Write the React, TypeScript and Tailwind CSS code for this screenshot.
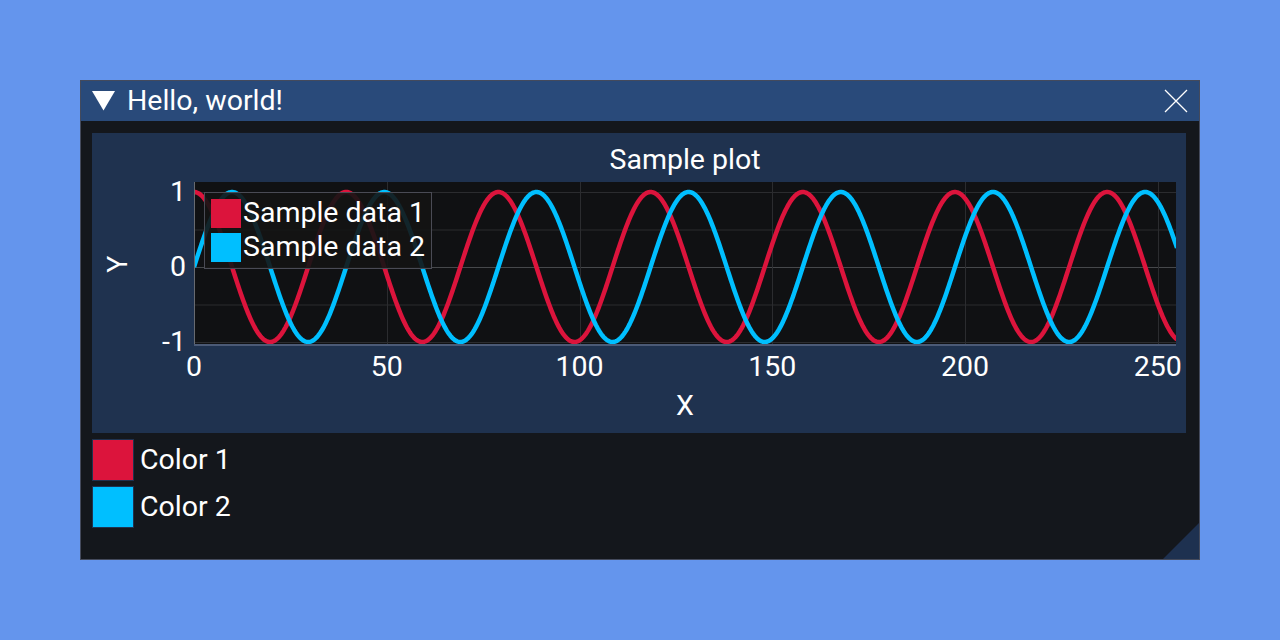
import React from "react";

const PW = 982;
const PH = 164;
const SX = 3.855;
const Y0 = 85;
const SY = 75;
const W = 0.15915;

function buildPath(fn: (x: number) => number) {
  const pts: string[] = [];
  for (let i = 0; i <= 1020; i++) {
    const x = i * 0.25;
    const px = x * SX;
    const py = Y0 - SY * fn(x);
    pts.push(`${i === 0 ? "M" : "L"}${px.toFixed(2)} ${py.toFixed(2)}`);
  }
  return pts.join(" ");
}

const font = { fontFamily: "Roboto, 'Noto Sans', sans-serif" };

export default function App() {
  const red = buildPath((x) => Math.cos(x * W));
  const blue = buildPath((x) => Math.sin(x * W));
  const xticks = [0, 50, 100, 150, 200, 250];
  const yticks: [string, number][] = [
    ["1", 1],
    ["0", 0],
    ["-1", -1],
  ];
  const hgrid = [1, 0.5, -0.5, -1];
  return (
    <div className="w-[1280px] h-[640px] bg-[#6495ed] pt-[80px] pl-[80px] text-white" style={font}>
      <div className="relative w-[1120px] h-[480px] border border-[#444a5c] bg-[#14171c] flex flex-col">
        {/* title bar */}
        <div className="h-[40px] bg-[#294a7a] flex items-center pl-[11px] pr-[11px]">
          <svg width="23" height="20" viewBox="0 0 23 20" className="shrink-0">
            <polygon points="0,0 23,0 11.5,19.5" fill="#ffffff" />
          </svg>
          <span className="ml-[12px] text-[28.5px] leading-none">Hello, world!</span>
          <div className="flex-1" />
          <svg width="24" height="24" viewBox="0 0 24 24" className="shrink-0">
            <path d="M1 1 L23 23 M23 1 L1 23" stroke="#ffffff" strokeWidth="1.3" fill="none" />
          </svg>
        </div>
        {/* body */}
        <div className="pl-[11px] pr-[13px] pt-[12px] flex flex-col">
          <div className="w-[1094px] h-[300px] bg-[#1f324f] flex flex-col">
            <div className="h-[49px] pt-[5px] ml-[102px] w-[982px] flex items-center justify-center text-[28.5px] leading-none">
              Sample plot
            </div>
            <div className="h-[164px] flex">
              <div className="w-[54px] flex items-center justify-center">
                <span className="-rotate-90 text-[28.5px] leading-none inline-block">Y</span>
              </div>
              <div className="w-[48px] relative">
                {yticks.map(([l, v]) => (
                  <span
                    key={l}
                    className="absolute right-[8px] text-[28.5px] leading-[28px]"
                    style={{ top: Y0 - SY * v - 14 }}
                  >
                    {l}
                  </span>
                ))}
              </div>
              <div className="w-[982px] h-[164px] relative bg-[#101113] overflow-hidden">
                <svg width={PW} height={PH} viewBox={`0 0 ${PW} ${PH}`} className="absolute left-0 top-0">
                  {hgrid.map((v) => (
                    <line key={v} x1="0" x2={PW} y1={Y0 - SY * v + 0.5} y2={Y0 - SY * v + 0.5} stroke="#2b2c2f" strokeWidth="1" />
                  ))}
                  <line x1="0" x2={PW} y1={Y0 + 0.5} y2={Y0 + 0.5} stroke="#46484b" strokeWidth="1" />
                  {xticks.slice(1).map((t) => (
                    <line key={t} x1={Math.round(t * SX) + 0.5} x2={Math.round(t * SX) + 0.5} y1="0" y2={PH} stroke="#2b2c2f" strokeWidth="1" />
                  ))}
                  <path d={red} stroke="#dc143c" strokeWidth="4.5" fill="none" strokeLinejoin="round" />
                  <path d={blue} stroke="#00bfff" strokeWidth="4.5" fill="none" strokeLinejoin="round" />
                  <line x1="0.5" x2="0.5" y1="0" y2={PH} stroke="#676a70" strokeWidth="1" />
                  <line x1="0" x2={PW} y1={PH - 1} y2={PH - 1} stroke="#4b5a76" strokeWidth="2" />
                </svg>
                <div className="absolute left-[10px] top-[10px] w-[228px] h-[77px] border border-[#4a4b55] bg-[#141414]/90 pl-[6px] pt-[6px] flex flex-col gap-[5px]">
                  <div className="h-[29px] flex items-center">
                    <div className="w-[30px] h-[29px] bg-[#dc143c] shrink-0" />
                    <span className="ml-[2px] text-[28.5px] leading-none whitespace-nowrap">Sample data 1</span>
                  </div>
                  <div className="h-[29px] flex items-center">
                    <div className="w-[30px] h-[29px] bg-[#00bfff] shrink-0" />
                    <span className="ml-[2px] text-[28.5px] leading-none whitespace-nowrap">Sample data 2</span>
                  </div>
                </div>
              </div>
            </div>
            <div className="h-[42px] ml-[102px] w-[982px] relative">
              {xticks.map((t) => (
                <span
                  key={t}
                  className="absolute top-[7px] text-[28.5px] leading-[28px] -translate-x-1/2"
                  style={{ left: t * SX }}
                >
                  {t}
                </span>
              ))}
            </div>
            <div className="h-[36px] ml-[102px] w-[982px] flex items-center justify-center text-[28.5px] leading-none">X</div>
          </div>
          <div className="mt-[6px] flex flex-col gap-[5px]">
            <div className="h-[42px] flex items-center">
              <div className="w-[42px] h-[42px] bg-[#dc143c] border border-[#1f324f] shrink-0" />
              <span className="ml-[6px] text-[28.5px] leading-none">Color 1</span>
            </div>
            <div className="h-[42px] flex items-center">
              <div className="w-[42px] h-[42px] bg-[#00bfff] border border-[#1f324f] shrink-0" />
              <span className="ml-[6px] text-[28.5px] leading-none">Color 2</span>
            </div>
          </div>
        </div>
        <svg width="36" height="36" viewBox="0 0 36 36" className="absolute right-0 bottom-0">
          <polygon points="36,0 36,36 0,36" fill="#1e3150" />
        </svg>
      </div>
    </div>
  );
}
